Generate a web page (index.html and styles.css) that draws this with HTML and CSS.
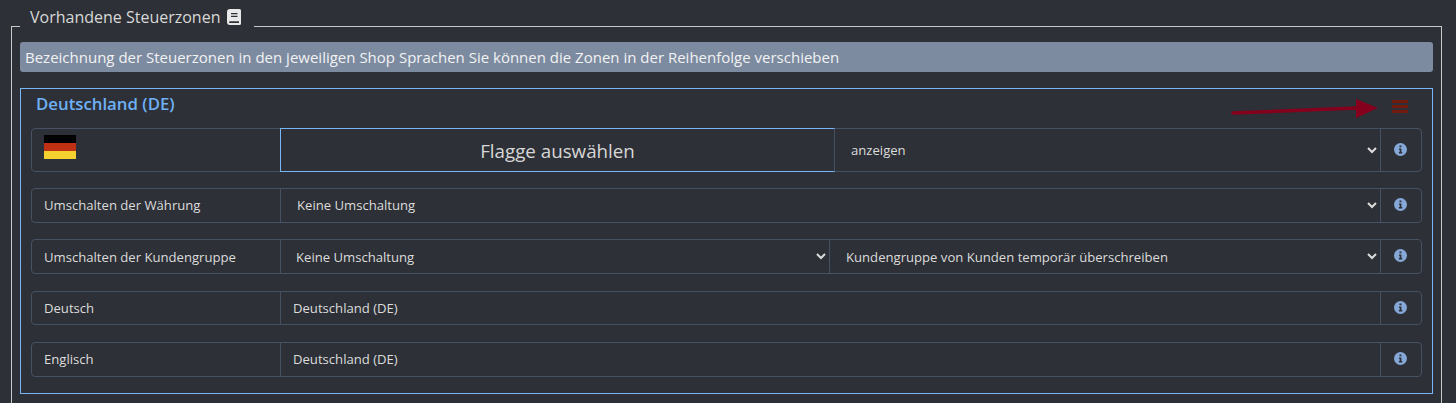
FILE: index.html
```html
<!DOCTYPE html>
<html lang="de">
<head>
<meta charset="utf-8">
<title>Steuerzonen</title>
<link rel="stylesheet" href="styles.css">
</head>
<body>
<fieldset class="panel">
  <legend class="panel-legend"><span class="legend-inner">Vorhandene Steuerzonen<svg class="book" viewBox="0 0 14 16" width="14" height="16"><path fill="#e9e9e9" fill-rule="evenodd" d="M3 0H12.5A1.5 1.5 0 0 1 14 1.5V14.500A1.500 1.500 0 0 1 12.500 16H3A3 3 0 0 1 0 13V3A3 3 0 0 1 3 0ZM4 4V5.200H10.500V4ZM4 6.800V8H10.500V6.800ZM3 12.300A.9.9 0 0 0 3 14.100H12V12.300Z"/></svg></span></legend>
  <div class="notice">Bezeichnung der Steuerzonen in den jeweiligen Shop Sprachen Sie können die Zonen in der Reihenfolge verschieben</div>
  <section class="zone">
    <header class="zone-head">
      <h2 class="zone-title">Deutschland (DE)</h2>
      <svg class="arrow" viewBox="0 0 150 24" width="150" height="24"><path d="M3 15L127 10" stroke="#85001c" stroke-width="3.500" stroke-linecap="round" fill="none"/><path d="M126 1L148 10L126 20Z" fill="#85001c"/></svg>
      <svg class="handle" viewBox="0 0 16 13" width="16" height="13"><path fill="#701a10" d="M0 0H16V3H0ZM0 5H16V8H0ZM0 10H16V13H0Z"/></svg>
    </header>
    <div class="row row-flag">
      <div class="label"><span class="flag"><i class="black"></i><i class="red"></i><i class="gold"></i></span></div>
      <button class="flag-btn" type="button">Flagge auswählen</button>
      <select class="field show"><option>anzeigen</option></select>
      <div class="info"><svg class="info-icon" viewBox="0 0 14 14" width="13" height="13"><circle cx="7" cy="7" r="7" fill="#86a8d8"/><path fill="#2d3036" d="M5.900 2.800H8V4.700H5.900ZM5.300 5.900H8V9.800H8.900V11.200H5.200V9.800H6.100V7.200H5.300Z"/></svg></div>
    </div>
    <div class="row">
      <div class="label">Umschalten der Währung</div>
      <select class="field wide"><option>Keine Umschaltung</option></select>
      <div class="info"><svg class="info-icon" viewBox="0 0 14 14" width="13" height="13"><circle cx="7" cy="7" r="7" fill="#86a8d8"/><path fill="#2d3036" d="M5.900 2.800H8V4.700H5.900ZM5.300 5.900H8V9.800H8.900V11.200H5.200V9.800H6.100V7.200H5.300Z"/></svg></div>
    </div>
    <div class="row">
      <div class="label">Umschalten der Kundengruppe</div>
      <select class="field half"><option>Keine Umschaltung</option></select>
      <select class="field rest"><option>Kundengruppe von Kunden temporär überschreiben</option></select>
      <div class="info"><svg class="info-icon" viewBox="0 0 14 14" width="13" height="13"><circle cx="7" cy="7" r="7" fill="#86a8d8"/><path fill="#2d3036" d="M5.900 2.800H8V4.700H5.900ZM5.300 5.900H8V9.800H8.900V11.200H5.200V9.800H6.100V7.200H5.300Z"/></svg></div>
    </div>
    <div class="row">
      <div class="label">Deutsch</div>
      <input class="field text" type="text" value="Deutschland (DE)">
      <div class="info"><svg class="info-icon" viewBox="0 0 14 14" width="13" height="13"><circle cx="7" cy="7" r="7" fill="#86a8d8"/><path fill="#2d3036" d="M5.900 2.800H8V4.700H5.900ZM5.300 5.900H8V9.800H8.900V11.200H5.200V9.800H6.100V7.200H5.300Z"/></svg></div>
    </div>
    <div class="row">
      <div class="label">Englisch</div>
      <input class="field text" type="text" value="Deutschland (DE)">
      <div class="info"><svg class="info-icon" viewBox="0 0 14 14" width="13" height="13"><circle cx="7" cy="7" r="7" fill="#86a8d8"/><path fill="#2d3036" d="M5.900 2.800H8V4.700H5.900ZM5.300 5.900H8V9.800H8.900V11.200H5.200V9.800H6.100V7.200H5.300Z"/></svg></div>
    </div>
  </section>
</fieldset>
</body>
</html>
```
FILE: styles.css
```css
:root { color-scheme: dark; }
* { box-sizing: border-box; }
html, body { margin: 0; height: 403px; overflow: hidden; }
body {
  background: #2d3036;
  color: #e4e4e4;
  font-family: "Open Sans", sans-serif;
  font-size: 13.12px;
  padding: 16px 14px 0 11px;
}
.panel {
  margin: 0;
  padding: 6px 8px 0 8px;
  border: 1px solid #c8c8c8;
  border-bottom: 0;
  height: 400px;
  min-width: 0;
}
.panel-legend {
  margin-left: 0;
  padding: 0 13px 0 10px;
  height: 20px;
  font-size: 16px;
  line-height: 20px;
  color: #d8d8d8;
  white-space: nowrap;
}
.legend-inner { display: block; margin-top: -9px; }
.book { vertical-align: -2px; margin-left: 7px; }
.notice {
  height: 30px;
  background: #7d8ba1;
  border-radius: 3px;
  padding: 0 5px;
  font-size: 15px;
  line-height: 30px;
  color: #f2f2f2;
}
.zone {
  position: relative;
  margin-top: 16px;
  height: 306px;
  border: 1px solid #77b5f5;
  padding: 0 10px;
}
.zone-head { height: 39px; position: relative; }
.zone-title {
  margin: 0;
  padding: 4px 0 0 5px;
  font-size: 16.8px;
  line-height: 22px;
  font-weight: 600;
  color: #6fb1f5;
}
.arrow { position: absolute; left: 1199px; top: 9px; }
.handle { position: absolute; left: 1361px; top: 11px; }
.row {
  display: flex;
  height: 34.6px;
  margin-bottom: 16.8px;
  border: 1px solid #465164;
  border-radius: 4px;
}
.row-flag { height: 44px; margin-bottom: 16px; }
.label {
  flex: 0 0 249px;
  padding-left: 12px;
  display: flex;
  align-items: center;
  border-right: 1px solid #465164;
  color: #dcdcdc;
}
.row-flag .label {
  flex-basis: 248px;
  align-items: flex-start;
  padding-top: 6px;
  border-right: 0;
}
.flag { display: flex; flex-direction: column; width: 32px; }
.flag i { display: block; height: 8px; }
.black { background: #000; }
.red { background: #bf3113; }
.gold { background: #f3cf2f; }
.flag-btn {
  flex: 0 0 555px;
  margin: -1px 0;
  background: transparent;
  border: 1px solid #77b5f5;
  border-right-color: #465164;
  color: #d8d8d8;
  font: 400 18.75px "Open Sans", sans-serif;
  padding: 0;
}
.field {
  background: transparent;
  border: 0;
  color: #dcdcdc;
  font: 400 13.12px "Open Sans", sans-serif;
  height: 100%;
  min-width: 0;
  outline: 0;
}
.wide, .rest, .show, .text { flex: 1 1 0; }
.wide, .show { padding-left: 12px; }
.half {
  flex: 0 0 549px;
  padding-left: 11px;
  border-right: 1px solid #465164;
}
.rest { padding-left: 12px; }
.text { padding: 0 12px; }
.info {
  flex: 0 0 41px;
  display: flex;
  align-items: center;
  justify-content: center;
  padding: 0 1px 2px 0;
  border-left: 1px solid #465164;
}
.info-icon { display: block; }
```
